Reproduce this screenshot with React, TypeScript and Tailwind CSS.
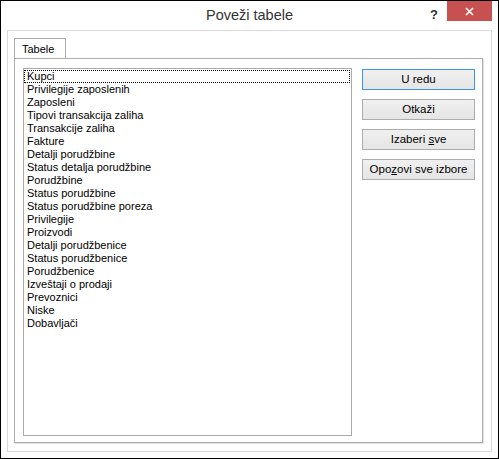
const tables = [
  'Kupci',
  'Privilegije zaposlenih',
  'Zaposleni',
  'Tipovi transakcija zaliha',
  'Transakcije zaliha',
  'Fakture',
  'Detalji porudžbine',
  'Status detalja porudžbine',
  'Porudžbine',
  'Status porudžbine',
  'Status porudžbine poreza',
  'Privilegije',
  'Proizvodi',
  'Detalji porudžbenice',
  'Status porudžbenice',
  'Porudžbenice',
  'Izveštaji o prodaji',
  'Prevoznici',
  'Niske',
  'Dobavljači',
];

const sans = "font-['Liberation_Sans',Arial,sans-serif]";

function DialogButton({ children, primary }: { children: React.ReactNode; primary?: boolean }) {
  return (
    <button
      className={`h-[21px] w-[113px] border bg-gradient-to-b from-[#f0f0f0] to-[#e5e5e5] text-[11.5px] leading-none text-black ${
        primary ? 'border-[#3c95eb]' : 'border-[#acacac]'
      }`}
    >
      {children}
    </button>
  );
}

export default function App() {
  return (
    <div className={`flex h-[459px] w-[499px] flex-col border border-black bg-white ${sans}`}>
      {/* Title bar */}
      <div className="relative flex h-[29px] shrink-0 items-center justify-center">
        <span className="pt-[1px] text-[14.5px] text-[#333333]">Poveži tabele</span>
        <span className="absolute left-[429px] top-[4px] text-[13px] font-bold text-[#333333]">?</span>
        <div className="absolute left-[446px] top-0 flex h-[20px] w-[45px] items-center justify-center bg-[#c75050]">
          <svg width="9" height="9" viewBox="0 0 9 9">
            <path d="M1 1 L8 8 M8 1 L1 8" stroke="#ffffff" strokeWidth="1.6" />
          </svg>
        </div>
      </div>

      {/* Client area */}
      <div className="flex flex-1 px-[6px] pb-[6px]">
        <div className="flex flex-1 flex-col border border-[#dadada] pb-[8px] pl-[6px] pr-[8px] pt-[7px]">
          {/* Tab strip */}
          <div className="flex">
            <div className="-mb-px flex h-[21px] w-[52px] items-center border border-b-0 border-[#acacac] bg-white pl-[7px] text-[11px] text-black">
              Tabele
            </div>
          </div>

          {/* Tab panel */}
          <div className="flex flex-1 gap-[10px] border border-[#acacac] pb-[6px] pl-[8px] pr-[6px] pt-[9px] shadow-[1px_1px_0_#e3e3e3]">
            <div className="flex w-[329px] flex-col border border-[#ababab] pt-[1px] pr-[1px]">
              {tables.map((name, i) => (
                <div
                  key={name}
                  className={`h-[13px] pl-[3px] text-[11px] leading-[13px] text-black ${
                    i === 0 ? 'outline-1 -outline-offset-1 outline-dotted outline-black' : ''
                  }`}
                >
                  {name}
                </div>
              ))}
            </div>

            <div className="mt-[1px] flex flex-col gap-[9px]">
              <DialogButton primary>U redu</DialogButton>
              <DialogButton>Otkaži</DialogButton>
              <DialogButton>
                Izaberi <span className="underline">s</span>ve
              </DialogButton>
              <DialogButton>
                Opo<span className="underline">z</span>ovi sve izbore
              </DialogButton>
            </div>
          </div>
        </div>
      </div>
    </div>
  );
}
